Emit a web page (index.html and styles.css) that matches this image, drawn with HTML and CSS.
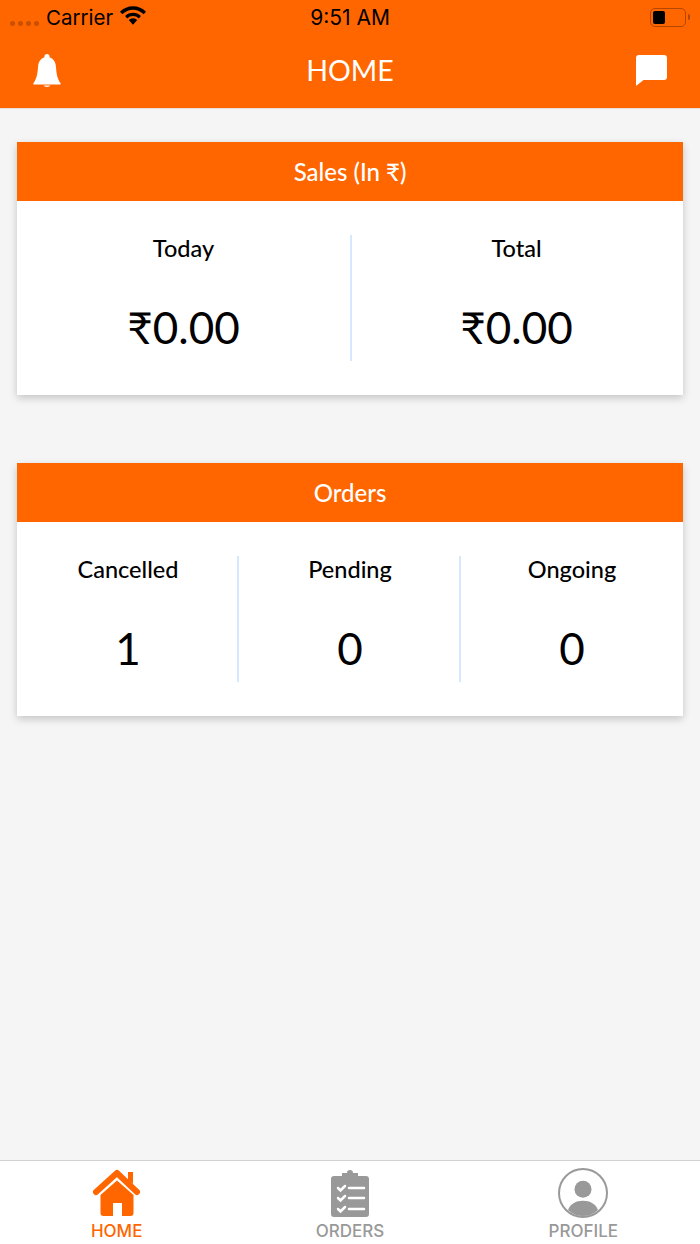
FILE: index.html
```html
<!doctype html>
<html lang="en">
  <head>
    <meta charset="utf-8" />
    <title>Home</title>
    <meta name="viewport" content="width=device-width, initial-scale=1" />
    <link rel="stylesheet" href="styles.css">
  </head>

  <body>
    <div class="app">
      <header class="top">
        <div class="status-bar">
          <div class="status-left">
            <span class="signal"><i></i><i></i><i></i><i></i></span>
            <span class="carrier">Carrier</span>
            <svg class="wifi" viewBox="1 1.500 24 17.200">
              <path d="M13 18.6 9.1 14.2a5.6 5.6 0 0 1 7.8 0z" />
              <path d="M13 7.6a10.4 10.4 0 0 1 7.3 3l-2 2.3a7.4 7.4 0 0 0-10.6 0l-2-2.300a10.400 10.400 0 0 1 7.300-3z" />
              <path d="M13 1.500a16.600 16.600 0 0 1 12 5.100l-2.200 2.400a13.400 13.400 0 0 0-19.600 0L1 6.600a16.600 16.600 0 0 1 12-5.100z" />
            </svg>
          </div>
          <div class="status-time">9:51 AM</div>
          <div class="status-right">
            <span class="battery"><span class="battery-level"></span></span>
            <span class="battery-cap"></span>
          </div>
        </div>
        <nav class="nav-bar">
          <svg class="bell" viewBox="0 0 28 34">
            <path d="M14 0a2.600 2.600 0 0 1 2.500 3.300c1.300.5 6 2.200 6.500 9.700.4 6.500 1.300 11.700 4.700 16.600.3.500 0 .9-.5.900H.8c-.5 0-.8-.4-.5-.9C3.700 24.700 4.600 19.500 5 13c.5-7.500 5.200-9.200 6.500-9.700A2.600 2.600 0 0 1 14 0z" />
            <path d="M10.500 31.600h7a3.800 2.400 0 0 1-7 0z" />
          </svg>
          <h1 class="nav-title">HOME</h1>
          <svg class="chat" viewBox="0 0 31 31">
            <path d="M3 0h25a3 3 0 0 1 3 3v19a3 3 0 0 1-3 3H7.500L.7 30.600c-.3.200-.7 0-.7-.4V3a3 3 0 0 1 3-3z" />
          </svg>
        </nav>
      </header>

      <main class="content">
        <section class="card">
          <h2 class="card-head">Sales (In ₹)</h2>
          <div class="card-body">
            <div class="stat">
              <div class="stat-label">Today</div>
              <div class="stat-value">₹0.00</div>
            </div>
            <div class="stat">
              <div class="stat-label">Total</div>
              <div class="stat-value">₹0.00</div>
            </div>
          </div>
        </section>

        <section class="card card-orders">
          <h2 class="card-head">Orders</h2>
          <div class="card-body">
            <div class="stat">
              <div class="stat-label">Cancelled</div>
              <div class="stat-value">1</div>
            </div>
            <div class="stat">
              <div class="stat-label">Pending</div>
              <div class="stat-value">0</div>
            </div>
            <div class="stat">
              <div class="stat-label">Ongoing</div>
              <div class="stat-value">0</div>
            </div>
          </div>
        </section>
      </main>

      <footer class="tabs">
        <div class="tab tab-active">
          <svg class="tab-icon" viewBox="0 0 50 50">
            <path d="M25 12.500 41.500 27V45a3 3 0 0 1-3 3H30V35H21V48H11.500a3 3 0 0 1-3-3V27z" />
            <path class="roof" d="M4 24 25 5l20 19" />
            <path d="M36 4h5v12l-5-4z" />
          </svg>
          <span>HOME</span>
        </div>
        <div class="tab">
          <svg class="tab-icon" viewBox="0 0 50 50">
            <path d="M9 8h8V5h5a3 3 0 0 1 6 0h5v3h8a3 3 0 0 1 3 3v35a3 3 0 0 1-3 3H9a3 3 0 0 1-3-3V11a3 3 0 0 1 3-3z" />
            <path class="list-line" d="M13 20l2.500 2.500 4.500-4.500M24 20h15M13 30l2.500 2.500 4.500-4.500M24 30h15M13 41l2.500 2.500 4.500-4.500M24 41h15" />
          </svg>
          <span>ORDERS</span>
        </div>
        <div class="tab">
          <svg class="tab-icon" viewBox="0 0 50 50">
            <circle class="ring" cx="25" cy="25" r="24" />
            <circle cx="25" cy="21.300" r="8.500" />
            <path d="M10 42C12 36 18 32.700 25 32.700s13 3.300 15 9.300a22 22 0 0 1-30 0z" />
          </svg>
          <span>PROFILE</span>
        </div>
      </footer>
    </div>
  </body>
</html>
```

FILE: styles.css
```css
html,
body {
  margin: 0;
  padding: 0;
  background: #f5f5f5;
  font-family: 'Lato', 'Noto Sans', sans-serif;
}
.app {
  width: 700px;
  height: 1244px;
  display: flex;
  flex-direction: column;
  overflow: hidden;
}

/* header */
.top {
  height: 108px;
  background: #ff6600;
  flex-shrink: 0;
  border-bottom: 1px solid #e9dfd8;
}
.status-bar {
  height: 34px;
  display: grid;
  grid-template-columns: 1fr auto 1fr;
  align-items: center;
  font-family: 'Inter', 'Liberation Sans', sans-serif;
  font-size: 21px;
  color: #000;
  padding: 0 10px;
}
.status-left {
  display: flex;
  align-items: center;
  gap: 7px;
}
.carrier {
  font-size: 20.500px;
}
.signal {
  display: flex;
  gap: 3px;
  margin-top: 12px;
}
.signal i {
  width: 5px;
  height: 5px;
  border-radius: 50%;
  background: #c85000;
}
.wifi {
  width: 26px;
  height: 19px;
  margin-top: -3px;
}
.status-right {
  display: flex;
  justify-content: flex-end;
  align-items: center;
}
.battery {
  width: 36px;
  height: 19px;
  border: 1.5px solid #b34700;
  border-radius: 5px;
  padding: 2px;
  box-sizing: border-box;
  display: flex;
}
.battery-level {
  width: 12px;
  background: #000;
  border-radius: 2px;
}
.battery-cap {
  width: 2px;
  height: 6px;
  margin-left: 2px;
  background: #b34700;
  border-radius: 0 2px 2px 0;
}
.nav-bar {
  height: 74px;
  display: grid;
  grid-template-columns: 1fr auto 1fr;
  align-items: center;
  padding: 0 33px 0 33px;
}
.bell {
  width: 28px;
  height: 34px;
  fill: #fff;
}
.chat {
  width: 31px;
  height: 31px;
  fill: #fff;
  margin-top: -2px;
  justify-self: end;
}
.nav-title {
  margin: 0 0 2px;
  font-size: 28.500px;
  font-weight: 400;
  color: #fff;
}

/* cards */
.content {
  flex: 1;
  display: flex;
  flex-direction: column;
  gap: 68px;
  padding: 33px 17px 0;
}
.card {
  background: #fff;
  box-shadow: 0 3px 8px rgba(0, 0, 0, 0.2);
}
.card-head {
  margin: 0;
  height: 59px;
  line-height: 60px;
  text-align: center;
  background: #ff6600;
  color: #fff;
  font-size: 24px;
  font-weight: 500;
}
.card-body {
  display: flex;
  padding: 34px 0;
}
.stat {
  flex: 1;
  height: 126px;
  text-align: center;
  color: #000;
  position: relative;
}
.stat + .stat::before {
  content: '';
  position: absolute;
  top: 0;
  bottom: 0;
  left: 0;
  width: 2px;
  background: #d4e9fd;
}
.card-orders .stat + .stat::before {
  left: -2px;
}
.stat-label {
  font-size: 23.500px;
  font-weight: 500;
  line-height: 26px;
  margin-bottom: 38px;
}
.stat-value {
  font-size: 44px;
  line-height: 56px;
}

/* bottom tabs */
.tabs {
  height: 83px;
  flex-shrink: 0;
  background: #fff;
  border-top: 1px solid #d2d2d2;
  display: grid;
  grid-template-columns: repeat(3, 1fr);
}
.tab {
  display: flex;
  flex-direction: column;
  align-items: center;
  padding-top: 7px;
  font-family: 'Inter', 'Liberation Sans', sans-serif;
  font-size: 17px;
  font-weight: 500;
  line-height: 20px;
  color: #999;
  fill: #999;
}
.tab-active {
  color: #ff6600;
  fill: #ff6600;
}
.tab-icon {
  width: 50px;
  height: 50px;
  margin-bottom: 3px;
}
.roof {
  fill: none;
  stroke: #ff6600;
  stroke-width: 6;
  stroke-linecap: round;
  stroke-linejoin: round;
}
.list-line {
  fill: none;
  stroke: #fff;
  stroke-width: 2.500;
  stroke-linecap: round;
}
.ring {
  fill: none;
  stroke: #999;
  stroke-width: 2;
}
```
